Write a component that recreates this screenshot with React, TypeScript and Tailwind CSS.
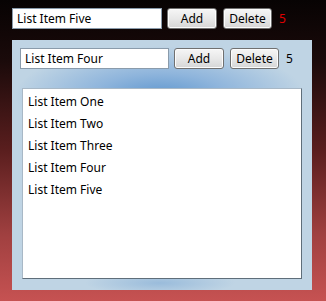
const font = { fontFamily: "'Noto Sans', 'DejaVu Sans', sans-serif" };

const Btn = ({ label, w }: { label: string; w: string }) => (
  <button
    className={`${w} h-[21px] rounded-[3px] border border-[#707070] bg-gradient-to-b from-[#f6f6f6] via-[#e8e8e8] to-[#d6d6d6] text-[12px] leading-none text-black shadow-[inset_0_0_0_1px_#fcfcfc]`}
  >
    {label}
  </button>
);

const Row = ({ value, count, countClass, tw }: { value: string; count: string; countClass: string; tw: string }) => (
  <div className="flex items-center h-[21px]">
    <div className={`${tw} h-[21px] border border-[#8a9bab] bg-white px-[4px] flex items-center text-[12px] text-black`}>
      {value}
    </div>
    <div className="ml-[5px] flex gap-[6px]">
      <Btn label="Add" w="w-[50px]" />
      <Btn label="Delete" w="w-[49px]" />
    </div>
    <span className={`ml-[7px] text-[12px] ${countClass}`}>{count}</span>
  </div>
);

export default function App() {
  const items = ["List Item One", "List Item Two", "List Item Three", "List Item Four", "List Item Five"];
  return (
    <div
      style={font}
      className="w-[326px] h-[301px] pt-[8px] pl-[12px] bg-[linear-gradient(to_bottom,#070303_0%,#1a0a0a_20%,#5a1e1e_50%,#a04040_78%,#c65252_100%)]"
    >
      <Row value="List Item Five" count="5" countClass="text-[#e00000]" tw="w-[150px]" />
      <div className="mt-[11px] w-[300px] h-[250px] pt-[8px] pl-[8px] bg-[radial-gradient(ellipse_75px_12px_at_148px_243px,rgba(150,185,218,0.9)_0%,rgba(191,212,228,0)_100%),radial-gradient(ellipse_145px_50px_at_148px_56px,#5f97cf_0%,#8fb5dc_45%,#bfd4e4_100%)]">
        <Row value="List Item Four" count="5" countClass="text-black" tw="w-[149px]" />
        <div className="mt-[19px] ml-[2px] w-[280px] h-[191px] bg-white border border-[#5f6e7a] border-t-[#a8b8c6] border-l-[#a8b8c6] pt-[2px] pl-[5px]">
          {items.map((t) => (
            <div key={t} className="h-[22px] flex items-center text-[12px] text-black">
              {t}
            </div>
          ))}
        </div>
      </div>
    </div>
  );
}
